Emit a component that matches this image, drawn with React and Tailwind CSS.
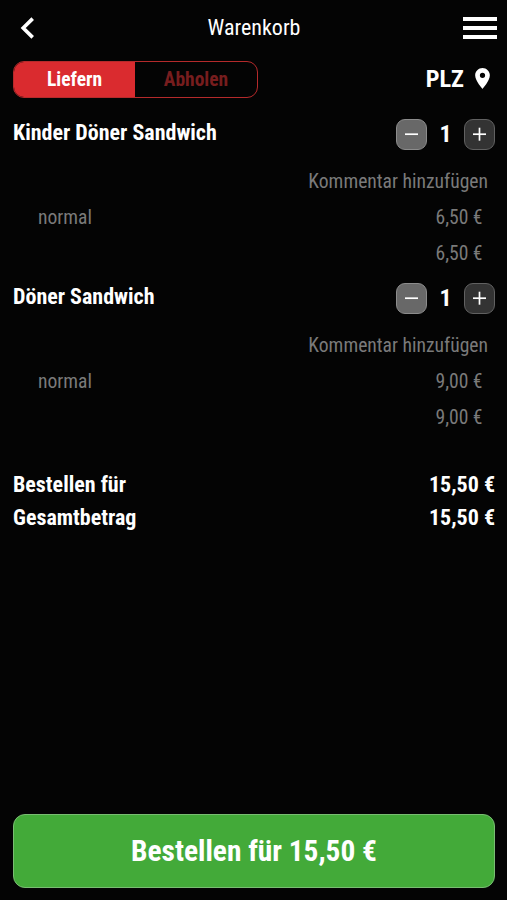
const items = [
  { name: "Kinder Döner Sandwich", variant: "normal", price: "6,50 €" },
  { name: "Döner Sandwich", variant: "normal", price: "9,00 €" },
];

function StepButton({ plus }) {
  return (
    <button
      className={
        "flex size-[31px] items-center justify-center rounded-[9px] border " +
        (plus ? "border-[#616161] bg-[#333333]" : "border-[#8c8c8c] bg-[#686868]")
      }
    >
      <svg className="size-[15px]" viewBox="0 0 15 15" fill="none" stroke="#fff" strokeWidth="1.7">
        <path d="M1 7.2h13" />
        {plus && <path d="M7.5 .7v13" />}
      </svg>
    </button>
  );
}

function Item({ name, variant, price }) {
  return (
    <section className="h-[164px]">
      <div className="flex h-9 items-center justify-between">
        <h2 className="pb-0.5 text-[22px] leading-[30px] font-bold">{name}</h2>
        <div className="flex items-center">
          <StepButton />
          <span className="w-[37px] text-center text-[24px] leading-[30px] font-bold">1</span>
          <StepButton plus />
        </div>
      </div>
      <div className="mt-[12px] pr-[7px] text-right text-[19.6px] leading-9 text-[#7a7a7a]">
        Kommentar hinzufügen
      </div>
      <div className="flex justify-between pr-[12.5px] pl-[25px] text-[19.6px] leading-9 text-[#7a7a7a]">
        <span>{variant}</span>
        <span>{price}</span>
      </div>
      <div className="pr-[12.5px] text-right text-[19.6px] leading-[36px] text-[#7a7a7a]">{price}</div>
    </section>
  );
}

export default function App() {
  return (
    <main className="flex h-[900px] w-[507px] flex-col bg-[#040404] pr-3 pl-[13px] font-['Roboto_Condensed','Roboto',sans-serif] font-stretch-condensed whitespace-nowrap text-white">
      <header className="grid h-14 grid-cols-3 items-center">
        <svg className="ml-[7px] h-[24px] w-[15px]" viewBox="0 0 15 24" fill="none" stroke="#fff" strokeWidth="3.6">
          <path d="M12.700 2.600L3.200 12l9.500 9.400" />
        </svg>
        <h1 className="text-center text-[22px] leading-[30px]">Warenkorb</h1>
        <div className="mr-[-2px] flex flex-col gap-[5px] justify-self-end">
          <i className="h-1 w-[34px] bg-white" />
          <i className="h-1 w-[34px] bg-white" />
          <i className="h-1 w-[34px] bg-white" />
        </div>
      </header>

      <div className="mt-[5px] flex h-[37px] items-center justify-between">
        <div className="flex h-[37px] w-[245px] overflow-hidden rounded-[11px] border border-[#b52a2b] text-[19.5px] leading-[35px] font-bold">
          <button className="w-[121px] bg-[#da2b2f]">Liefern</button>
          <button className="flex-1 text-[#771d1e]">Abholen</button>
        </div>
        <div className="flex items-center pr-[5px] pb-0.5">
          <span className="text-[24.3px] leading-[30px] font-bold">PLZ</span>
          <svg className="ml-[11px] h-[21px] w-[15px]" viewBox="5 2 14 20" fill="#fff">
            <path d="M12 2C8.13 2 5 5.13 5 9c0 5.25 7 13 7 13s7-7.75 7-13c0-3.87-3.13-7-7-7zm0 9.500a2.500 2.500 0 0 1 0-5 2.500 2.500 0 0 1 0 5z" />
          </svg>
        </div>
      </div>

      <div className="mt-[18px]">
        {items.map((item) => (
          <Item key={item.name} {...item} />
        ))}
      </div>

      <div className="mt-[24px] text-[22px] leading-[33px] font-bold">
        <div className="flex justify-between">
          <span>Bestellen für</span>
          <span>15,50 €</span>
        </div>
        <div className="flex justify-between">
          <span>Gesamtbetrag</span>
          <span>15,50 €</span>
        </div>
      </div>

      <button className="mt-auto mb-3 h-[74px] rounded-[12px] border border-[#79bd72] bg-[#43aa39] text-[29.4px] leading-[72px] font-bold">
        Bestellen für 15,50 €
      </button>
    </main>
  );
}
